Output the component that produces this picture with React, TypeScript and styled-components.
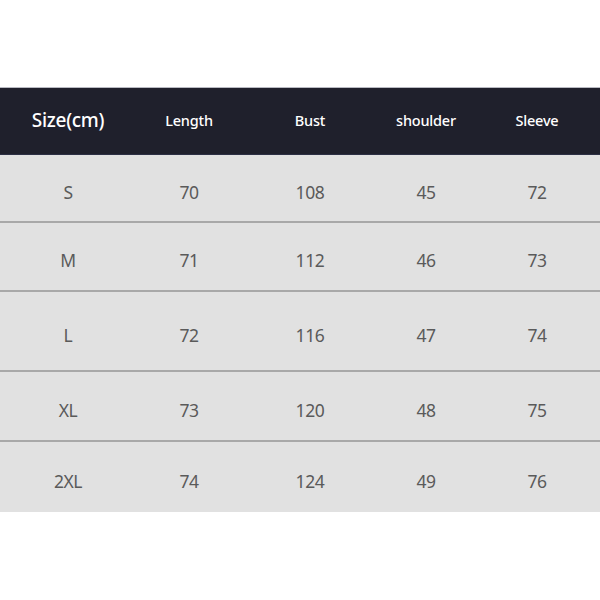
import React from "react";
import styled, { createGlobalStyle } from "styled-components";

const Global = createGlobalStyle`
  html, body { margin: 0; padding: 0; background: #ffffff; }
  body { font-family: "Noto Sans", "Open Sans", sans-serif; }
`;

const Page = styled.div`
  width: 600px;
  height: 600px;
  padding-top: 87px;
  box-sizing: border-box;
  background: #ffffff;
`;

const COLS = "136px 106px 136px 96px 126px";

const Header = styled.div`
  display: grid;
  grid-template-columns: ${COLS};
  height: 68px;
  box-sizing: border-box;
  background: #1f202c;
  border-top: 1px solid #b9bac2;
  border-bottom: 1px solid #2c2f44;
  align-items: center;
`;

const HeadCell = styled.div<{ $big?: boolean }>`
  text-align: center;
  color: #ffffff;
  font-size: ${(p) => (p.$big ? "19px" : "14.5px")};
  font-weight: 500;
  letter-spacing: ${(p) => (p.$big ? "-0.3px" : "-0.2px")};
  padding-bottom: 2px;
`;

const Row = styled.div<{ $h: number; $line: boolean }>`
  display: grid;
  grid-template-columns: ${COLS};
  height: ${(p) => p.$h}px;
  box-sizing: border-box;
  background: #e1e1e1;
  border-bottom: ${(p) => (p.$line ? "2px solid #a8a8a8" : "none")};
  align-items: center;
`;

const Cell = styled.div`
  text-align: center;
  color: #5a5a5a;
  font-size: 17.5px;
  letter-spacing: -0.4px;
  padding-top: 7px;
`;

const headers = ["Length", "Bust", "shoulder", "Sleeve"];
const rows: { size: string; vals: number[]; h: number }[] = [
  { size: "S", vals: [70, 108, 45, 72], h: 68 },
  { size: "M", vals: [71, 112, 46, 73], h: 69 },
  { size: "L", vals: [72, 116, 47, 74], h: 80 },
  { size: "XL", vals: [73, 120, 48, 75], h: 70 },
  { size: "2XL", vals: [74, 124, 49, 76], h: 70 },
];

export default function App() {
  return (
    <>
      <Global />
      <Page>
        <Header>
          <HeadCell $big>Size(cm)</HeadCell>
          {headers.map((h) => (
            <HeadCell key={h}>{h}</HeadCell>
          ))}
        </Header>
        {rows.map((r, i) => (
          <Row key={r.size} $h={r.h} $line={i < rows.length - 1}>
            <Cell>{r.size}</Cell>
            {r.vals.map((v, j) => (
              <Cell key={j}>{v}</Cell>
            ))}
          </Row>
        ))}
      </Page>
    </>
  );
}
